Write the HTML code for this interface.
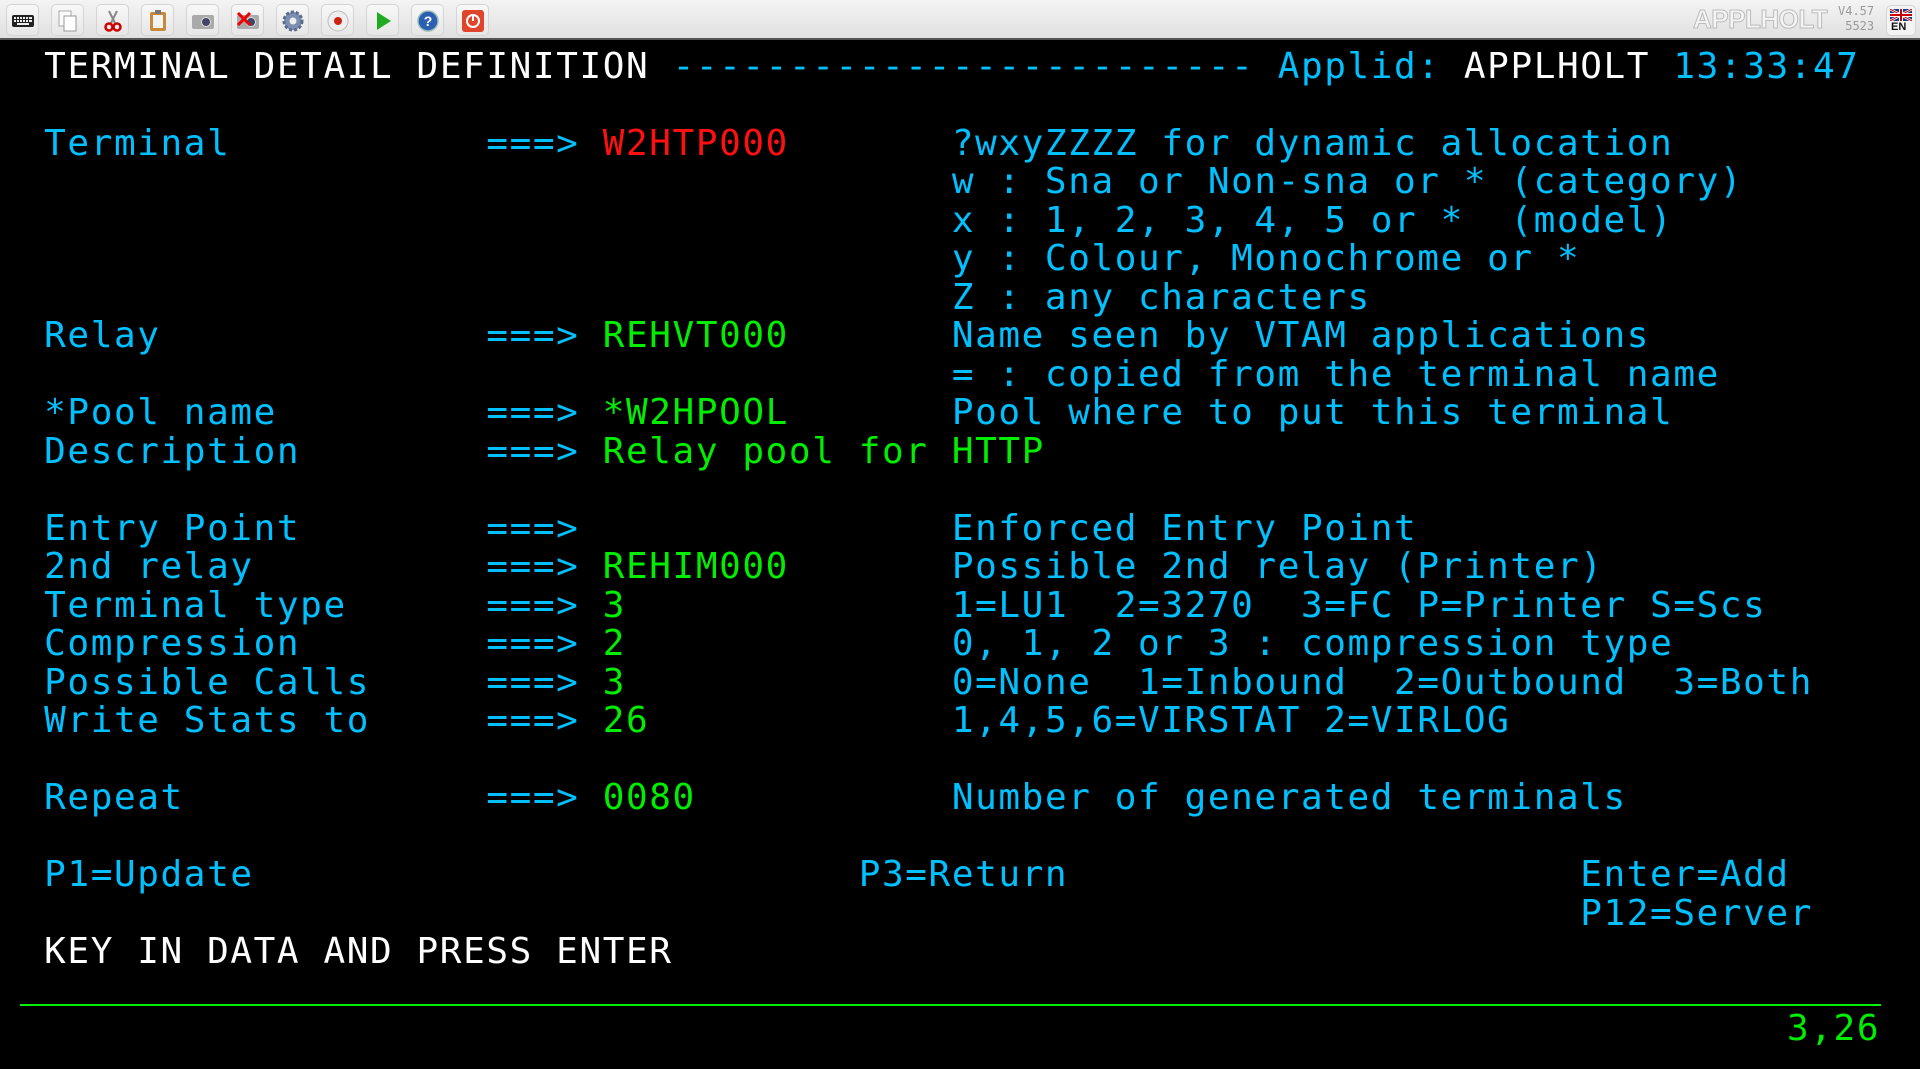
<!DOCTYPE html>
<html><head><meta charset="utf-8"><style>
html,body{margin:0;padding:0;background:#000;width:1920px;height:1069px;overflow:hidden}
#tb{position:absolute;left:0;top:0;width:1920px;height:40px;background:linear-gradient(#f4f4f4,#e0e0e0);border-bottom:2px solid #555;box-sizing:border-box}
.b{position:absolute;top:4px;width:33px;height:32px;border:1px solid #d4d4d4;border-radius:5px;background:linear-gradient(#f8f8f8,#e6e6e6);box-sizing:border-box}
.b svg{position:absolute;left:4px;top:4px}
.ln{position:absolute;left:-2.4px;font-family:"DejaVu Sans Mono","Liberation Mono",monospace;font-size:36px;letter-spacing:1.6px;line-height:38px;white-space:pre;color:#00c0ff}
.w{color:#fff}.g{color:#00ee00}.r{color:#ff1010}
</style></head><body>
<div id="tb">
<div class="b" style="left:6px"><svg width="24" height="24"><rect x="1" y="6" width="22" height="12" rx="2" fill="#222"/><g fill="#eee"><rect x="3" y="8" width="2" height="2"/><rect x="6" y="8" width="2" height="2"/><rect x="9" y="8" width="2" height="2"/><rect x="12" y="8" width="2" height="2"/><rect x="15" y="8" width="2" height="2"/><rect x="18" y="8" width="3" height="2"/><rect x="3" y="11" width="2" height="2"/><rect x="6" y="11" width="2" height="2"/><rect x="9" y="11" width="2" height="2"/><rect x="12" y="11" width="2" height="2"/><rect x="15" y="11" width="2" height="2"/><rect x="18" y="11" width="3" height="2"/><rect x="6" y="14" width="12" height="2"/></g></svg></div>
<div class="b" style="left:51px"><svg width="24" height="24"><rect x="3" y="2" width="12" height="15" fill="#fafafa" stroke="#aaa"/><rect x="8" y="7" width="12" height="15" fill="#fff" stroke="#999"/></svg></div>
<div class="b" style="left:96px"><svg width="24" height="24"><path d="M8 2L14 14M16 2L10 14" stroke="#888" stroke-width="2"/><circle cx="8" cy="18" r="3.5" fill="none" stroke="#c00" stroke-width="2.5"/><circle cx="16" cy="18" r="3.5" fill="none" stroke="#c00" stroke-width="2.5"/></svg></div>
<div class="b" style="left:141px"><svg width="24" height="24"><rect x="4" y="3" width="16" height="19" rx="2" fill="#c88a3a"/><rect x="7" y="6" width="10" height="13" fill="#f4f4f4"/><rect x="9" y="1" width="6" height="4" fill="#777"/></svg></div>
<div class="b" style="left:186px"><svg width="24" height="24"><rect x="1" y="6" width="22" height="14" rx="2" fill="#aaa"/><circle cx="15" cy="13" r="4.5" fill="#446" stroke="#ddd"/></svg></div>
<div class="b" style="left:231px"><svg width="24" height="24"><rect x="1" y="6" width="22" height="14" rx="2" fill="#aaa"/><circle cx="15" cy="13" r="4.5" fill="#446" stroke="#ddd"/><path d="M2 4L14 16M14 4L2 16" stroke="#e00" stroke-width="3"/></svg></div>
<div class="b" style="left:276px"><svg width="24" height="24"><circle cx="12" cy="12" r="9" fill="#7d8fb0" stroke="#5a6a8a" stroke-width="3" stroke-dasharray="3 2"/><circle cx="12" cy="12" r="3.5" fill="#eee"/></svg></div>
<div class="b" style="left:321px"><svg width="24" height="24"><circle cx="12" cy="12" r="10" fill="#eee" stroke="#bbb"/><circle cx="12" cy="12" r="4" fill="#c21"/></svg></div>
<div class="b" style="left:366px"><svg width="24" height="24"><path d="M6 3L20 12L6 21Z" fill="#2a2"/></svg></div>
<div class="b" style="left:411px"><svg width="24" height="24"><circle cx="12" cy="12" r="10" fill="#2b5fb0" stroke="#9bb" stroke-width="1.5"/><text x="12" y="17" text-anchor="middle" font-family="Liberation Sans" font-weight="bold" font-size="14" fill="#fff">?</text></svg></div>
<div class="b" style="left:456px"><svg width="24" height="24"><rect x="1" y="1" width="22" height="22" rx="3" fill="#e0442a"/><circle cx="12" cy="12" r="6" fill="none" stroke="#fff" stroke-width="2"/><path d="M12 6V12" stroke="#fff" stroke-width="2"/></svg></div>
<div style="position:absolute;left:1693px;top:4px;font:bold 26px 'Liberation Sans',sans-serif;color:#f4f4f4;-webkit-text-stroke:1px #bbb;letter-spacing:-0.5px">APPLHOLT</div>
<div style="position:absolute;left:1838px;top:4px;font:12px 'DejaVu Sans Mono',monospace;color:#999;line-height:15px;text-align:right">V4.57<br>&nbsp;5523</div>
<div class="b" style="left:1886px;top:5px;width:30px;height:31px;background:#f4f4f4"><svg width="22" height="12" style="left:3px;top:3px"><rect width="22" height="12" fill="#1a3a8a"/><path d="M0 0L22 12M22 0L0 12" stroke="#fff" stroke-width="2.5"/><path d="M0 0L22 12M22 0L0 12" stroke="#c00" stroke-width="1"/><path d="M11 0V12M0 6H22" stroke="#fff" stroke-width="4"/><path d="M11 0V12M0 6H22" stroke="#c00" stroke-width="2"/></svg><div style="position:absolute;left:4px;top:15px;font:bold 11px 'Liberation Sans',sans-serif;color:#111">EN</div></div>
</div>

<div class="ln" style="top:48px">  <span class="w">TERMINAL DETAIL DEFINITION</span> ------------------------- Applid: <span class="w">APPLHOLT</span> 13:33:47</div>
<div class="ln" style="top:125px">  Terminal           ===> <span class="r">W2HTP000</span>       ?wxyZZZZ for dynamic allocation</div>
<div class="ln" style="top:163px">                                         w : Sna or Non-sna or * (category)</div>
<div class="ln" style="top:202px">                                         x : 1, 2, 3, 4, 5 or *  (model)</div>
<div class="ln" style="top:240px">                                         y : Colour, Monochrome or *</div>
<div class="ln" style="top:279px">                                         Z : any characters</div>
<div class="ln" style="top:317px">  Relay              ===> <span class="g">REHVT000</span>       Name seen by VTAM applications</div>
<div class="ln" style="top:356px">                                         = : copied from the terminal name</div>
<div class="ln" style="top:394px">  *Pool name         ===> <span class="g">*W2HPOOL</span>       Pool where to put this terminal</div>
<div class="ln" style="top:433px">  Description        ===> <span class="g">Relay pool for HTTP</span></div>
<div class="ln" style="top:510px">  Entry Point        ===>                Enforced Entry Point</div>
<div class="ln" style="top:548px">  2nd relay          ===> <span class="g">REHIM000</span>       Possible 2nd relay (Printer)</div>
<div class="ln" style="top:587px">  Terminal type      ===> <span class="g">3</span>              1=LU1  2=3270  3=FC P=Printer S=Scs</div>
<div class="ln" style="top:625px">  Compression        ===> <span class="g">2</span>              0, 1, 2 or 3 : compression type</div>
<div class="ln" style="top:664px">  Possible Calls     ===> <span class="g">3</span>              0=None  1=Inbound  2=Outbound  3=Both</div>
<div class="ln" style="top:702px">  Write Stats to     ===> <span class="g">26</span>             1,4,5,6=VIRSTAT 2=VIRLOG</div>
<div class="ln" style="top:779px">  Repeat             ===> <span class="g">0080</span>           Number of generated terminals</div>
<div class="ln" style="top:856px">  P1=Update                          P3=Return                      Enter=Add</div>
<div class="ln" style="top:895px">                                                                    P12=Server</div>
<div class="ln w" style="top:933px">  KEY IN DATA AND PRESS ENTER</div>
<div style="position:absolute;left:20px;top:1004px;width:1861px;height:2px;background:#00ee00"></div>
<div class="ln g" style="top:1010px;left:1787px">3,26</div>
</body></html>
